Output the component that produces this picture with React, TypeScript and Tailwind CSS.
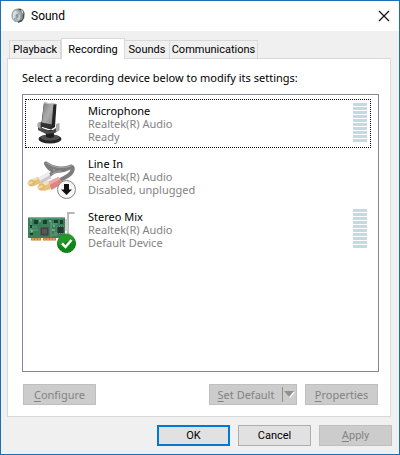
import { useState } from "react";
import type { ReactNode } from "react";

const tabs = [
  { name: "Playback", width: "w-[52px]" },
  { name: "Recording", width: "w-16" },
  { name: "Sounds", width: "w-[45px]" },
  { name: "Communications", width: "w-[88px]" },
];

function SpeakerIcon() {
  return (
    <svg width="16" height="16" viewBox="0 0 16 16" aria-hidden="true">
      <path d="M5 1l4-.6 3 1.600 1.600 3-.4 5-2.200 3.500-4 1.500z" fill="#4c4f51" />
      <path d="M8 2l3 1 1 3-.5 5-3 2z" fill="#8d9294" />
      <path d="M10 1l2 2 .5 3-1.500-1z" fill="#c9cccd" />
      <ellipse cx="5.500" cy="7.500" rx="4.600" ry="6.200" fill="#a7b1b6" stroke="#8d979b" strokeWidth=".8" />
      <path d="M2 4.500L5 2.500l2 3.500-2 3-3 2z" fill="#d7dee1" />
      <path d="M5.500 9l3-3 .8 3-1.500 4z" fill="#c3d2da" />
      <ellipse cx="6" cy="8" rx="1.600" ry="2.300" fill="#8b9aa2" />
    </svg>
  );
}

function MicrophoneIcon() {
  return (
    <svg width="50" height="50" viewBox="0 0 50 50" aria-hidden="true">
      <defs>
        <linearGradient id="mic-face" x1="0" x2="1" y1="0" y2="1">
          <stop offset="0" stopColor="#767676" />
          <stop offset=".5" stopColor="#adadad" />
          <stop offset="1" stopColor="#858585" />
        </linearGradient>
      </defs>
      <ellipse cx="24" cy="40" rx="11.500" ry="4.500" fill="#262626" />
      <ellipse cx="24" cy="38.500" rx="9.500" ry="3" fill="#505050" />
      <path d="M20 31h8v7q-4 2-8 0z" fill="#1e1e1e" />
      <path d="M12 24l4-1v6l9 3 5-3v-3l3-1v6l-4 3-9 1-8-4z" fill="#4a4a4a" />
      <path d="M11.500 24l3-1v7l-3-2zM30 25l3.500-1v7l-3.500 2z" fill="#a9a9a9" />
      <path d="M18 3.500L30.500 5 29 28l-4 2.500-10-3z" fill="#242424" />
      <path d="M18 3.500l9.500 1.200L25.500 27l-9.700-2z" fill="url(#mic-face)" />
      <path d="M15.500 23.500l10.500 2-.5 5-10-3z" fill="#323232" />
      <path d="M18 3.500l10 1 2.500 1-3-.3-9.500-1z" fill="#e0e0e0" />
    </svg>
  );
}

function LineInIcon() {
  return (
    <svg width="50" height="50" viewBox="0 0 50 50" aria-hidden="true">
      <g fill="none" strokeLinecap="round" strokeLinejoin="round">
        <path d="M24 23q4-4 9-4t11-3" stroke="#7c7c7c" strokeWidth="3.500" />
        <path d="M20 11.500q7 5 14 5t11-2q3 1 1 5t-11 8" stroke="#7c7c7c" strokeWidth="4" />
        <path d="M20 11.500q1 4 6 7" stroke="#7c7c7c" strokeWidth="3.500" />
        <path d="M21 11q7 4.500 13 4.500T45 14M26 22q4-3 9-3" stroke="#a2a2a2" strokeWidth="1.200" />
      </g>
      <path d="M12 26l10.500-6 3 6L15 32z" fill="#c9c9ce" />
      <path d="M12 26l10.500-6 1.500 3-10.500 6z" fill="#eeeef1" />
      <path d="M4 28l8-3 3 6-7 3z" fill="#e3c27f" />
      <path d="M4 28l7-3 1 2-7 3z" fill="#f8e2b5" />
      <ellipse cx="5.500" cy="31" rx="3.300" ry="3.500" fill="#dfbc74" />
      <path d="M1 31l5-2 1 2-5 2z" fill="#f2d79d" />
      <path d="M22 30l10.500-5 5 6-12 7z" fill="#dc8585" />
      <path d="M22 30l10.500-5 2 2-11 6z" fill="#efaaa7" />
      <path d="M14 32l8-3 3 8-7 2z" fill="#e3c27f" />
      <path d="M14 32l8-3 1 3-8 3z" fill="#f8e2b5" />
      <ellipse cx="15.500" cy="35" rx="3.500" ry="3.800" fill="#dfbc74" />
      <path d="M11 35l5-2 1 2-5 2z" fill="#f2d79d" />
      <circle cx="40.500" cy="37.500" r="9" fill="#f7f7f7" stroke="#858585" />
      <path d="M38 32h5v5.500h3L40.500 43 35 37.500h3z" fill="#111" />
    </svg>
  );
}

function SoundCardIcon() {
  return (
    <svg width="50" height="50" viewBox="0 0 50 50" aria-hidden="true">
      <path d="M42 30V8h6.500" fill="none" stroke="#b4b4b4" strokeWidth="1.800" />
      <path d="M39 14h3v12h-3" fill="#d0d0d0" />
      <path d="M2 12.500h37V33H2z" fill="#387f5a" />
      <path d="M2 12.500h37v1H2z" fill="#6aa785" />
      <path d="M5 33h25v2.500H5z" fill="#c57f36" />
      <path d="M7 33v2.500m3-2.500v2.500m3-2.500v2.500m6-2.500v2.500m3-2.500v2.500m3-2.500v2.500m3-2.500v2.500" stroke="#e8b778" />
      <path d="M16 33v3" stroke="#fff" strokeWidth="2" />
      <path d="M3 22h8m-8 3h9M5 16v14m20-14v16M10 14h8m10 14h8M25 19h6M26 30h5" stroke="#75ac88" strokeWidth=".8" />
      <path d="M8 15h4v4H8zM17 15h4v4h-4zM28 15h4v3h-4zM34 15h3v4h-3zM4 20h2v3H4zM4 28h3v2H4z" fill="#173f2c" />
      <path d="M4 15h2m7 1h2m8 0h2M5 26h2m19-1h3M27 21h2" stroke="#d5ddcf" strokeWidth=".8" />
      <path d="M13.500 21.500h10v10h-10z" fill="#626d68" />
      <path d="M14.500 22.500h8v8h-8z" fill="#3d4341" />
      <path d="M16 24h5v5h-5z" fill="#535957" />
      <path d="M31 21.500h7v7h-7z" fill="#1f3a2e" stroke="#7d9186" strokeDasharray="1 1" />
      <circle cx="40.500" cy="38.500" r="9" fill="#0b8a15" stroke="#08720f" />
      <path d="M32 37a8.500 8.500 0 0 1 17-1q-8-1-16 5z" fill="#39a83c" opacity=".5" />
      <path d="M36 38.500l3.500 3.500 6-7" fill="none" stroke="#fff" strokeWidth="2.500" />
    </svg>
  );
}

function LevelMeter() {
  return (
    <div className="flex w-[14px] flex-col gap-px" aria-hidden="true">
      {Array.from({ length: 10 }, (_, i) => (
        <span key={i} className="h-[3px] bg-[#c1dce3]" />
      ))}
    </div>
  );
}

const devices = [
  { name: "Microphone", status: "Ready", icon: <MicrophoneIcon />, meter: true },
  { name: "Line In", status: "Disabled, unplugged", icon: <LineInIcon />, meter: false },
  { name: "Stereo Mix", status: "Default Device", icon: <SoundCardIcon />, meter: true },
];

function Label({ text }: { text: string }) {
  return (
    <span>
      <u className="underline-offset-2">{text[0]}</u>
      {text.slice(1)}
    </span>
  );
}

function DisabledButton({ children }: { children: ReactNode }) {
  return (
    <button disabled className="h-[21px] w-[73px] border border-[#bfbfbf] bg-[#cccccc] text-[#838383]">
      {children}
    </button>
  );
}

export default function App() {
  const [tab, setTab] = useState("Recording");
  const [selected, setSelected] = useState("Microphone");

  return (
    <main className="flex min-h-screen flex-col border border-[#1a6fb5] bg-[#f0f0f0] font-['Noto_Sans','Open_Sans',sans-serif] text-[11px] leading-[13px] text-black">
      <header className="flex h-[30px] items-center bg-white pr-[5px] pl-[10px]">
        <SpeakerIcon />
        <h1 className="ml-1 flex-1 font-[Roboto,sans-serif] text-xs">Sound</h1>
        <button aria-label="Close" className="p-1">
          <svg width="12" height="12" viewBox="0 0 12 12" fill="none" stroke="#111" strokeWidth="1.200">
            <path d="M1 1l10 10M11 1L1 11" />
          </svg>
        </button>
      </header>

      <div className="flex flex-1 flex-col px-[6px] pt-[7px] pr-2">
        <div role="tablist" className="z-10 -mb-px flex h-[21px] items-end pl-[2px] font-[Roboto,sans-serif] whitespace-nowrap">
          {tabs.map(({ name, width }) => (
            <button
              key={name}
              role="tab"
              aria-selected={tab === name}
              onClick={() => setTab(name)}
              className={`${width} flex justify-center border-[#d9d9d9] ${
                tab === name
                  ? "h-[21px] items-center border border-b-0 bg-white"
                  : "h-[19px] items-center border-y border-r bg-[#f0f0f0] first:border-l"
              }`}
            >
              {name}
            </button>
          ))}
        </div>

        <section role="tabpanel" aria-label={tab} className="flex flex-1 flex-col border border-[#d9d9d9] bg-white pt-3 pr-[11px] pb-[11px] pl-[14px]">
          <p>Select a recording device below to modify its settings:</p>
          <ul role="listbox" aria-label="Recording devices" className="mt-[10px] flex flex-1 flex-col gap-1 border border-[#828790] py-1 pr-[7px] pl-[2px]">
            {devices.map((d) => (
              <li
                key={d.name}
                role="option"
                aria-selected={selected === d.name}
                onClick={() => setSelected(d.name)}
                className={`flex h-[49px] items-start border pr-[3px] ${
                  selected === d.name ? "border-dotted border-black" : "border-transparent"
                }`}
              >
                <div className="-mt-px w-[50px]">{d.icon}</div>
                <div className="ml-3 flex-1 pt-1 text-[#838383]">
                  <div className="text-black">{d.name}</div>
                  <div>Realtek(R) Audio</div>
                  <div>{d.status}</div>
                </div>
                {d.meter && (
                  <div className="pt-[3px]">
                    <LevelMeter />
                  </div>
                )}
              </li>
            ))}
          </ul>
          <div className="mt-3 flex gap-2 px-px">
            <DisabledButton>
              <Label text="Configure" />
            </DisabledButton>
            <div className="ml-auto flex h-[21px] w-[88px] items-center border border-[#bfbfbf] bg-[#cccccc]">
              <button disabled className="flex-1 text-[#838383]">
                <Label text="Set Default" />
              </button>
              <button disabled aria-label="More default options" className="flex h-[15px] w-[14px] items-center justify-center border-l border-[#909090]">
                <svg width="11" height="7" viewBox="0 0 11 7">
                  <path d="M1 1h10L6 7z" fill="#fff" />
                  <path d="M0 0h10L5 6z" fill="#909090" />
                </svg>
              </button>
            </div>
            <DisabledButton>
              <Label text="Properties" />
            </DisabledButton>
          </div>
        </section>
      </div>

      <footer className="flex justify-end gap-2 pt-2 pr-[7px] pb-2 font-[Roboto,sans-serif]">
        <button className="h-[21px] w-[73px] border-2 border-[#0078d7] bg-[#e1e1e1]">OK</button>
        <button className="h-[21px] w-[73px] border border-[#adadad] bg-[#e1e1e1]">Cancel</button>
        <DisabledButton>
          <Label text="Apply" />
        </DisabledButton>
      </footer>
    </main>
  );
}
